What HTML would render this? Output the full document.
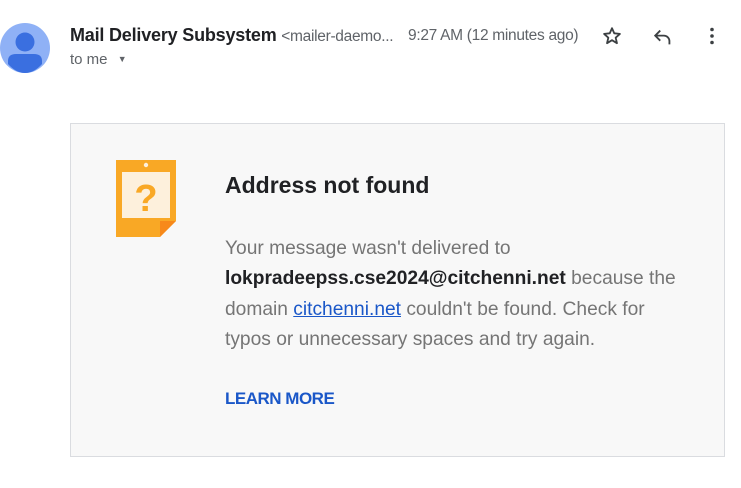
<!DOCTYPE html>
<html><head><style>
body{margin:0;width:741px;height:488px;background:#fff;font-family:"Liberation Sans",Arial,sans-serif;position:relative;overflow:hidden}
.a{position:absolute;white-space:nowrap}
</style></head><body>
<svg class="a" style="left:0;top:23px" width="50" height="50" viewBox="0 0 50 50">
<circle cx="25" cy="25" r="25" fill="#8fb1f6"/>
<circle cx="25" cy="19" r="9.5" fill="#3a6fe0"/>
<path d="M8 38 Q8 31 16 31 H34 Q42 31 42 38 V41 Q34 50 25 50 Q16 50 8 41 Z" fill="#3a6fe0"/>
</svg>
<div class="a" style="left:70px;top:25px;font-size:18px;font-weight:bold;color:#202124;letter-spacing:-0.2px">Mail Delivery Subsystem <span style="font-weight:normal;font-size:15.5px;color:#5f6368;letter-spacing:-0.3px">&lt;mailer-daemo...</span></div>
<div class="a" style="left:408px;top:27px;font-size:15.5px;color:#5f6368;letter-spacing:-0.3px">9:27 AM (12 minutes ago)</div>
<div class="a" style="left:70px;top:51px;font-size:15px;color:#5f6368">to me <span style="font-size:9px;position:relative;top:-2px;margin-left:6px">&#9660;</span></div>
<svg class="a" style="left:601px;top:25px" width="22" height="22" viewBox="0 0 24 24"><path d="M12 3.5l2.5 5.6 6.1.6-4.6 4.1 1.4 6-5.4-3.2-5.4 3.2 1.4-6-4.6-4.1 6.1-.6z" fill="none" stroke="#3c4043" stroke-width="2" stroke-linejoin="round"/></svg>
<svg class="a" style="left:652px;top:26px" width="22" height="22" viewBox="0 0 24 24"><path d="M9 5L3.5 10.5 9 16M4 10.5h9a6 6 0 0 1 6 6V20" fill="none" stroke="#3c4043" stroke-width="2"/></svg>
<svg class="a" style="left:702px;top:26px" width="20" height="20" viewBox="0 0 20 20"><circle cx="10" cy="3.5" r="1.8" fill="#3c4043"/><circle cx="10" cy="10" r="1.8" fill="#3c4043"/><circle cx="10" cy="16.5" r="1.8" fill="#3c4043"/></svg>
<div class="a" style="left:70px;top:123px;width:653px;height:332px;background:#f8f8f8;border:1px solid #dadce0"></div>
<svg class="a" style="left:116px;top:160px" width="61" height="78" viewBox="0 0 61 78">
<path d="M0 0H60V61L44 77H0Z" fill="#f9a825"/>
<rect x="6" y="12" width="48" height="46" fill="#fdf0dc"/>
<circle cx="30" cy="5" r="2.2" fill="#fdf0dc"/>
<path d="M44 77V61H60Z" fill="#f57f17" opacity=".75"/>
<text x="30" y="51" text-anchor="middle" font-family="Liberation Sans" font-weight="bold" font-size="38" fill="#f9a825">?</text>
</svg>
<div class="a" style="left:225px;top:172px;font-size:23px;font-weight:bold;color:#202124">Address not found</div>
<div class="a" style="left:225px;top:234px;font-size:19.2px;line-height:30.3px;color:#757575;white-space:normal;width:455px">Your message wasn't delivered to<br><b style="color:#202124">lokpradeepss.cse2024@citchenni.net</b> because the domain <span style="color:#1a57c8;text-decoration:underline">citchenni.net</span> couldn't be found. Check for typos or unnecessary spaces and try again.</div>
<div class="a" style="left:225px;top:389px;font-size:17px;font-weight:bold;color:#1a57c8;letter-spacing:-0.5px">LEARN MORE</div>
</body></html>
